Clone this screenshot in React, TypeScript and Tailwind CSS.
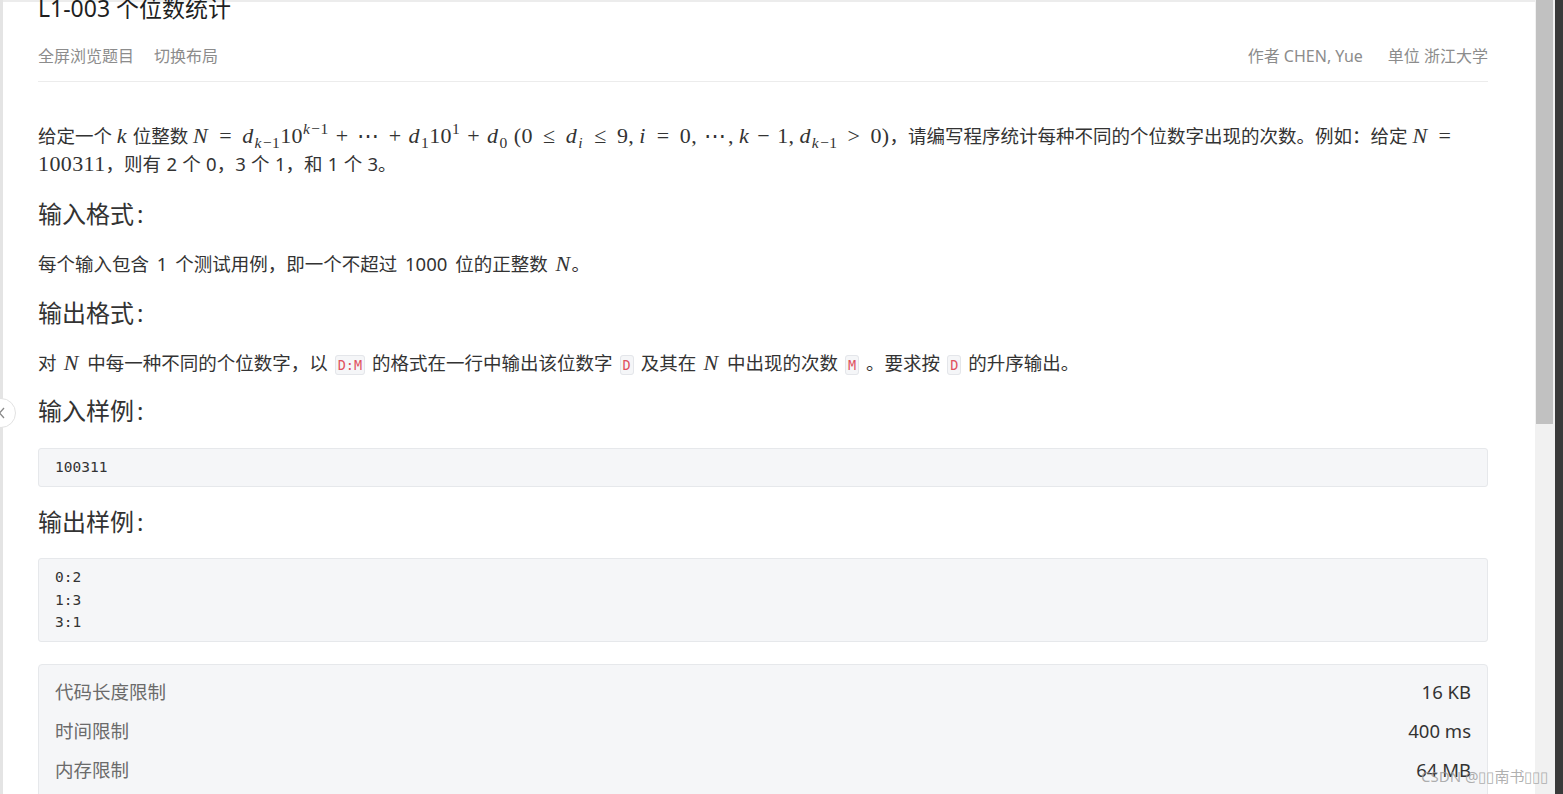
import React from "react";

const sans = "font-['Noto_Sans','Noto_Sans_CJK_SC',sans-serif]";
const math = "font-['Liberation_Serif','DejaVu_Serif',serif] text-[22px] tracking-[0.4px] [word-spacing:0px]";

type C = { children: React.ReactNode };
const I = ({ children }: C) => <i className="italic pr-[1px]">{children}</i>;
const Rel = ({ children }: C) => (
  <span className="mx-[8px] inline-block w-[17px] text-center">{children}</span>
);
const Bin = ({ children }: C) => (
  <span className="mx-[5px] inline-block w-[17px] text-center">{children}</span>
);
const Dots = () => <span className="inline-block w-[26px] text-center">⋯</span>;
const Cm = () => <span className="mr-[5px]">,</span>;
const Sub = ({ children }: C) => (
  <span className="relative top-[5px] text-[15.5px] leading-none">{children}</span>
);
const Sup = ({ children }: C) => (
  <span className="relative top-[-9px] text-[15.5px] leading-none">{children}</span>
);
const Code = ({ children }: C) => (
  <code className="mx-[7px] rounded-[3px] border border-[#e4e6ea] bg-[#f5f6f8] px-[2px] py-[1px] font-['DejaVu_Sans_Mono',monospace] text-[13.5px] leading-none text-[#e0525f]">
    {children}
  </code>
);
const H2 = ({ children, mt }: { children: React.ReactNode; mt: string }) => (
  <h2 className={`${mt} text-[24px] leading-[32px] text-[#333]`}>
    {children}
    <span className="ml-[3px]">:</span>
  </h2>
);

export default function App() {
  return (
    <div className={`relative flex h-[794px] w-full overflow-hidden bg-white text-[#333] ${sans}`}>
      <div className="w-[3px] shrink-0 bg-[#e4e4e4]" />
      <main className="flex min-w-0 flex-1 flex-col border-t-2 border-[#ececec] pl-[35px] pr-[47px]">
        <h1 className="mt-[-9px] text-[23px] leading-[30px] text-[#1f1f1f]">L1-003 个位数统计</h1>
        <div className="mt-[21px] flex justify-between border-b border-[#ececec] pb-[13px] text-[16px] leading-[24px] text-[#8c8c8c]">
          <div className="flex gap-[20px]">
            <span>全屏浏览题目</span>
            <span>切换布局</span>
          </div>
          <div className="flex gap-[25px]">
            <span>作者 CHEN, Yue</span>
            <span>单位 浙江大学</span>
          </div>
        </div>

        <div className="mt-[40px] text-[18.5px] leading-[28px]">
          <div className="whitespace-nowrap">
            给定一个 <span className={math}><I>k</I></span> 位整数{" "}
            <span className={math}>
              <I>N</I>
              <Rel>=</Rel>
              <I>d</I>
              <Sub>
                <I>k</I>−1
              </Sub>
              10
              <Sup>
                <I>k</I>−1
              </Sup>
              <Bin>+</Bin>
              <Dots />
              <Bin>+</Bin>
              <I>d</I>
              <Sub>1</Sub>10<Sup>1</Sup>
              <Bin>+</Bin>
              <I>d</I>
              <Sub>0</Sub>
              <span className="ml-[6px]">(0</span>
              <Rel>≤</Rel>
              <I>d</I>
              <Sub>
                <I>i</I>
              </Sub>
              <Rel>≤</Rel>9<Cm />
              <I>i</I>
              <Rel>=</Rel>0<Cm />
              <Dots />
              <Cm />
              <I>k</I>
              <Bin>−</Bin>1<Cm />
              <I>d</I>
              <Sub>
                <I>k</I>−1
              </Sub>
              <Rel>&gt;</Rel>0)
            </span>
            ，请编写程序统计每种不同的个位数字出现的次数。例如：给定{" "}
            <span className={math}>
              <I>N</I>
              <Rel>=</Rel>
            </span>
          </div>
          <div className="whitespace-nowrap [word-spacing:0.5px]">
            <span className={math}>100311</span>，则有 2 个 0，3 个 1，和 1 个 3。
          </div>
        </div>

        <H2 mt="mt-[20px]">输入格式</H2>
        <p className="mt-[20px] text-[18.5px] leading-[28px] [word-spacing:3px]">
          每个输入包含 1 个测试用例，即一个不超过 1000 位的正整数 <span className={math}><I>N</I></span>。
        </p>

        <H2 mt="mt-[19px]">输出格式</H2>
        <p className="mt-[20px] text-[18.5px] leading-[28px] [word-spacing:2.5px]">
          对 <span className={math}><I>N</I></span> 中每一种不同的个位数字，以<Code>D:M</Code>的格式在一行中输出该位数字<Code>D</Code>及其在{" "}
          <span className={math}><I>N</I></span> 中出现的次数<Code>M</Code>。要求按<Code>D</Code>的升序输出。
        </p>

        <H2 mt="mt-[18px]">输入样例</H2>
        <pre className="mt-[21px] rounded-[3px] border border-[#e6e8eb] bg-[#f5f6f8] px-[16px] py-[7px] font-['DejaVu_Sans_Mono',monospace] text-[14.5px] leading-[23px] text-[#333]">
          100311
        </pre>

        <H2 mt="mt-[19px]">输出样例</H2>
        <pre className="mt-[20px] rounded-[3px] border border-[#e6e8eb] bg-[#f5f6f8] px-[16px] py-[7px] font-['DejaVu_Sans_Mono',monospace] text-[14.5px] leading-[22.5px] text-[#333]">
          {"0:2\n1:3\n3:1"}
        </pre>

        <div className="mt-[22px] rounded-[4px] border border-[#e6e8eb] bg-[#f5f6f8] px-[16px] pt-[8px] pb-[10px] text-[18.5px]">
          {[
            ["代码长度限制", "16 KB"],
            ["时间限制", "400 ms"],
            ["内存限制", "64 MB"],
            ["栈限制", "8192 KB"],
          ].map(([k, v]) => (
            <div key={k} className="flex h-[39px] items-center justify-between">
              <span className="text-[#6b6b6b]">{k}</span>
              <span className="text-[#333]">{v}</span>
            </div>
          ))}
        </div>
      </main>
      <div className="flex w-[20px] shrink-0 flex-col bg-[#f1f1f1]">
        <div className="ml-[1px] mr-[2px] h-[424px] bg-[#c1c1c1]" />
      </div>
      <div className="w-[8px] shrink-0 bg-[#3a3a3a]" />

      <div className="absolute left-[-14px] top-[398px] flex h-[30px] w-[30px] items-center justify-end rounded-full border border-[#e2e2e2] bg-white pr-[9px]">
        <svg width="8" height="12" viewBox="0 0 8 12" fill="none" stroke="#888" strokeWidth="1.3">
          <path d="M6 1 L1.5 6 L6 11" />
        </svg>
      </div>

      <div className="pointer-events-none absolute left-[1421px] top-[764px] text-[15px] leading-[24px] text-[#9a9a9a]/80">
        CSDN @▯▯南书▯▯▯
      </div>
    </div>
  );
}
